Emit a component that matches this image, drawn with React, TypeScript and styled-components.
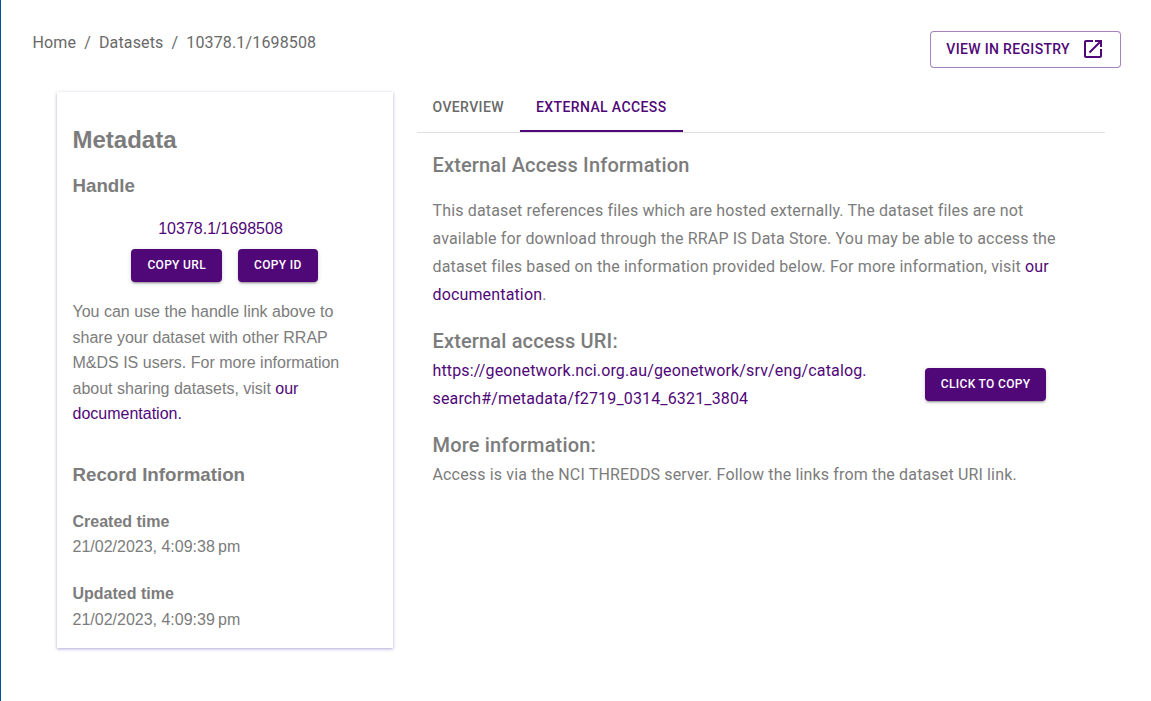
import React from "react";
import styled, { createGlobalStyle } from "styled-components";

const GlobalStyle = createGlobalStyle`
  * { box-sizing: border-box; }
  body {
    margin: 0;
    background: #fff;
    color: #7c7c7c;
    font-family: Roboto, sans-serif;
    font-size: 16px;
  }
`;

const Page = styled.div`
  height: 701px;
  border-left: 1px solid #00519a;
  overflow: hidden;
`;

const TopBar = styled.header`
  display: flex;
  justify-content: space-between;
  align-items: flex-start;
  padding: 31px 30px 0 31.5px;
  height: 92px;
`;

const Breadcrumbs = styled.nav`
  display: flex;
  gap: 8px;
  line-height: 24px;
  letter-spacing: 0.15px;
  color: #696969;
`;

const Button = styled.button<{ $outlined?: boolean }>`
  display: inline-flex;
  align-items: center;
  justify-content: center;
  font-family: Roboto, sans-serif;
  font-weight: 500;
  text-transform: uppercase;
  white-space: nowrap;
  border-radius: 4px;
  margin: 0;
  ${({ $outlined }) =>
    $outlined
      ? `
    height: 37px;
    gap: 11px;
    padding: 0 15px 2px;
    font-size: 14px;
    letter-spacing: 0.33px;
    color: #500778;
    background: #fff;
    border: 1px solid rgba(80, 7, 120, 0.5);
  `
      : `
    height: 33px;
    padding: 0 16px 1px;
    font-size: 12px;
    letter-spacing: 0.33px;
    color: #fff;
    background: #500778;
    border: 0;
    box-shadow: 0 3px 1px -2px rgba(0,0,0,.2), 0 2px 2px rgba(0,0,0,.14), 0 1px 5px rgba(0,0,0,.12);
  `}
`;

const Columns = styled.main`
  display: flex;
  align-items: flex-start;
  gap: 23.5px;
  padding: 0 46px 0 56px;
`;

const Card = styled.aside`
  width: 336px;
  height: 556px;
  padding: 32px 15.5px 0;
  font-family: "Liberation Sans", Arial, sans-serif;
  line-height: 25.6px;
  box-shadow: 0 1px 3px rgba(40, 30, 150, 0.38);
`;

const CardTitle = styled.h2`
  margin: 0;
  font-size: 24px;
  line-height: 32px;
`;

const CardHeading = styled.h3<{ $top: number }>`
  margin: ${({ $top }) => $top}px 0 0;
  font-size: 18.72px;
  line-height: 26px;
`;

const Handle = styled.div`
  margin: 17px 9px 0 0;
  text-align: center;
`;

const ButtonRow = styled.div`
  display: flex;
  justify-content: center;
  gap: 16px;
  margin: 7.4px 1px 17px 0;
`;

const CardText = styled.p`
  margin: 0;
`;

const Link = styled.a`
  color: #500778;
`;

const Record = styled.div<{ $top: number }>`
  margin-top: ${({ $top }) => $top}px;
`;

const Details = styled.section`
  flex: 1;
  min-width: 0;
  letter-spacing: 0.15px;
`;

const Tabs = styled.div`
  display: flex;
  height: 41px;
  border-bottom: 1px solid #e0e0e0;
`;

const Tab = styled.div<{ $active?: boolean }>`
  height: 40px;
  padding: 0 16px;
  font-size: 14px;
  line-height: 30px;
  font-weight: 500;
  letter-spacing: 0.39px;
  color: ${({ $active }) => ($active ? "#500778" : "#696969")};
  border-bottom: ${({ $active }) => ($active ? "2px solid #500778" : "0")};
`;

const Panel = styled.div`
  padding: 16px 16px 0;
`;

const Heading = styled.h6<{ $top?: number }>`
  margin: ${({ $top = 0 }) => $top}px 0 0;
  font-size: 20px;
  line-height: 32px;
  font-weight: 500;
`;

const Body = styled.p<{ $top?: number }>`
  margin: ${({ $top = 0 }) => $top}px 0 0;
  line-height: 28px;
  letter-spacing: 0.15px;
`;

const UriRow = styled.div`
  display: flex;
  align-items: flex-start;
  justify-content: space-between;
  padding-right: 42.6px;

  ${Button} {
    margin-top: 11px;
  }
`;

const App = () => (
  <Page>
    <GlobalStyle />
    <TopBar>
      <Breadcrumbs>
        <span>Home</span>
        <span>/</span>
        <span>Datasets</span>
        <span>/</span>
        <span>10378.1/1698508</span>
      </Breadcrumbs>
      <Button $outlined>
        View in Registry
        <svg width="24" height="24" viewBox="0 0 24 24" fill="currentColor">
          <path d="M19 19H5V5h7V3H5c-1.11 0-2 .9-2 2v14c0 1.1.89 2 2 2h14c1.1 0 2-.9 2-2v-7h-2v7zM14 3v2h3.59l-9.83 9.83 1.41 1.41L19 6.41V10h2V3h-7z" />
        </svg>
      </Button>
    </TopBar>
    <Columns>
      <Card>
        <CardTitle>Metadata</CardTitle>
        <CardHeading $top={17}>Handle</CardHeading>
        <Handle>
          <Link>10378.1/1698508</Link>
        </Handle>
        <ButtonRow>
          <Button>Copy URL</Button>
          <Button>Copy ID</Button>
        </ButtonRow>
        <CardText>
          You can use the handle link above to share your dataset with other RRAP
          M&amp;DS IS users. For more information about sharing datasets, visit{" "}
          <Link>our documentation.</Link>
        </CardText>
        <CardHeading $top={34.6}>Record Information</CardHeading>
        <Record $top={21}>
          <b>Created time</b>
          <div>21/02/2023, 4:09:38{"\u202f"}pm</div>
        </Record>
        <Record $top={21.4}>
          <b>Updated time</b>
          <div>21/02/2023, 4:09:39{"\u202f"}pm</div>
        </Record>
      </Card>
      <Details>
        <Tabs>
          <Tab>OVERVIEW</Tab>
          <Tab $active>EXTERNAL ACCESS</Tab>
        </Tabs>
        <Panel>
          <Heading>External Access Information</Heading>
          <Body $top={16}>
            This dataset references files which are hosted externally. The dataset
            files are not available for download through the RRAP IS Data Store. You
            may be able to access the dataset files based on the information provided
            below. For more information, visit <Link>our documentation</Link>.
          </Body>
          <Heading $top={16}>External access URI:</Heading>
          <UriRow>
            <Body>
              <Link>
                https://geonetwork.nci.org.au/geonetwork/srv/eng/catalog.
                <br />
                search#/metadata/f2719_0314_6321_3804
              </Link>
            </Body>
            <Button>Click to copy</Button>
          </UriRow>
          <Heading $top={16}>More information:</Heading>
          <Body>
            Access is via the NCI THREDDS server. Follow the links from the dataset
            URI link.
          </Body>
        </Panel>
      </Details>
    </Columns>
  </Page>
);

export default App;
